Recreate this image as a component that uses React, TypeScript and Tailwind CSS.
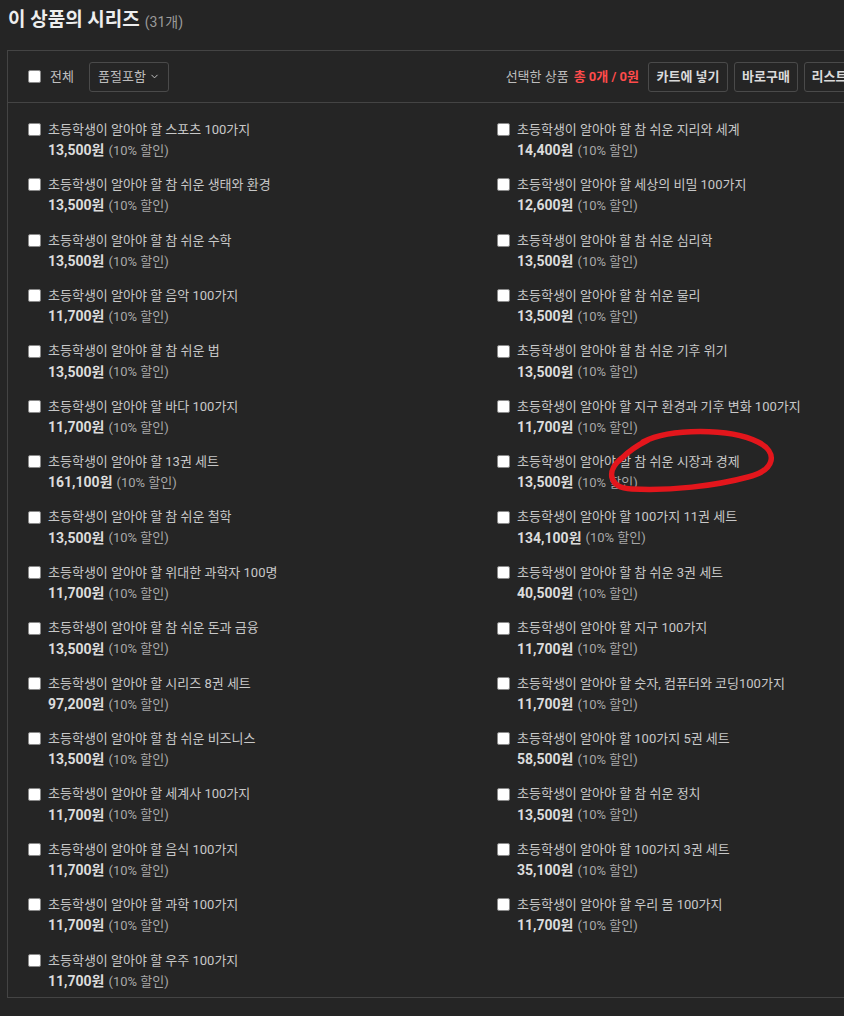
import { ChevronDown } from "lucide-react";

const left = [
  ["초등학생이 알아야 할 스포츠 100가지", "13,500"],
  ["초등학생이 알아야 할 참 쉬운 생태와 환경", "13,500"],
  ["초등학생이 알아야 할 참 쉬운 수학", "13,500"],
  ["초등학생이 알아야 할 음악 100가지", "11,700"],
  ["초등학생이 알아야 할 참 쉬운 법", "13,500"],
  ["초등학생이 알아야 할 바다 100가지", "11,700"],
  ["초등학생이 알아야 할 13권 세트", "161,100"],
  ["초등학생이 알아야 할 참 쉬운 철학", "13,500"],
  ["초등학생이 알아야 할 위대한 과학자 100명", "11,700"],
  ["초등학생이 알아야 할 참 쉬운 돈과 금융", "13,500"],
  ["초등학생이 알아야 할 시리즈 8권 세트", "97,200"],
  ["초등학생이 알아야 할 참 쉬운 비즈니스", "13,500"],
  ["초등학생이 알아야 할 세계사 100가지", "11,700"],
  ["초등학생이 알아야 할 음식 100가지", "11,700"],
  ["초등학생이 알아야 할 과학 100가지", "11,700"],
  ["초등학생이 알아야 할 우주 100가지", "11,700"],
];

const right = [
  ["초등학생이 알아야 할 참 쉬운 지리와 세계", "14,400"],
  ["초등학생이 알아야 할 세상의 비밀 100가지", "12,600"],
  ["초등학생이 알아야 할 참 쉬운 심리학", "13,500"],
  ["초등학생이 알아야 할 참 쉬운 물리", "13,500"],
  ["초등학생이 알아야 할 참 쉬운 기후 위기", "13,500"],
  ["초등학생이 알아야 할 지구 환경과 기후 변화 100가지", "11,700"],
  ["초등학생이 알아야 할 참 쉬운 시장과 경제", "13,500"],
  ["초등학생이 알아야 할 100가지 11권 세트", "134,100"],
  ["초등학생이 알아야 할 참 쉬운 3권 세트", "40,500"],
  ["초등학생이 알아야 할 지구 100가지", "11,700"],
  ["초등학생이 알아야 할 숫자, 컴퓨터와 코딩100가지", "11,700"],
  ["초등학생이 알아야 할 100가지 5권 세트", "58,500"],
  ["초등학생이 알아야 할 참 쉬운 정치", "13,500"],
  ["초등학생이 알아야 할 100가지 3권 세트", "35,100"],
  ["초등학생이 알아야 할 우리 몸 100가지", "11,700"],
];

const Box = () => (
  <span className="inline-block w-[13px] h-[13px] bg-white border border-[#8a8a8a] rounded-[2px] shrink-0" />
);

const Item = ({ title, price }: { title: string; price: string }) => (
  <div className="h-[42px]">
    <div className="flex items-center gap-[7px] h-[21px]">
      <Box />
      <span className="text-[13px] text-[#c8c8c8]">{title}</span>
    </div>
    <div className="pl-[20px] h-[21px] flex items-center">
      <span className="text-[14px] font-bold text-[#dcdcdc]">{price}원</span>
      <span className="text-[13px] text-[#a8a8a8] ml-[4px]">(10% 할인)</span>
    </div>
  </div>
);

const App = () => {
  const rows = left.map((l, i) => [l, right[i]]);
  return (
    <div
      className="relative w-full min-h-screen overflow-hidden bg-[#252525]"
      style={{ fontFamily: "Roboto, 'Noto Sans CJK KR', sans-serif" }}
    >
      <div className="pl-[8px] pt-[7px] h-[50px] flex items-start">
        <span className="text-[19px] font-bold text-[#eeeeee] leading-[26px]">이 상품의 시리즈</span>
        <span className="text-[14px] text-[#9a9a9a] leading-[26px] ml-[5px] pt-[2px]">(31개)</span>
      </div>

      <div className="ml-[7px] w-[908px] border border-[#444444]">
        <div className="h-[52px] border-b border-[#444444] flex items-center justify-between pl-[20px] pr-[20px]">
          <div className="flex items-center">
            <Box />
            <span className="ml-[9px] text-[13px] text-[#c0c0c0]">전체</span>
            <div className="ml-[15px] w-[80px] h-[30px] border border-[#4a4a4a] rounded-[3px] flex items-center justify-center gap-[3px]">
              <span className="text-[13px] text-[#bdbdbd]">품절포함</span>
              <ChevronDown size={11} strokeWidth={2} className="text-[#cfcfcf]" />
            </div>
          </div>
          <div className="flex items-center">
            <span className="text-[13px] text-[#bdbdbd]">선택한 상품</span>
            <span className="ml-[5px] text-[13px] font-bold text-[#ff4b4b]">총 0개 / 0원</span>
            <div className="ml-[9px] w-[80px] h-[30px] border border-[#4a4a4a] rounded-[3px] flex items-center justify-center text-[13px] font-bold text-[#dadada]">
              카트에 넣기
            </div>
            <div className="ml-[6px] w-[64px] h-[30px] border border-[#4a4a4a] rounded-[3px] flex items-center justify-center text-[13px] font-bold text-[#dadada]">
              바로구매
            </div>
            <div className="ml-[6px] w-[90px] h-[30px] border border-[#4a4a4a] rounded-[3px] flex items-center justify-center text-[13px] font-bold text-[#dadada]">
              리스트에 담기
            </div>
          </div>
        </div>

        <div className="pl-[20px] pt-[16px] pb-[5px] grid grid-cols-[469px_469px] gap-y-[13.4px]">
          {rows.map(([l, r], i) => (
            <div key={i} className="contents">
              <Item title={l[0]} price={l[1]} />
              {r ? <Item title={r[0]} price={r[1]} /> : <div />}
            </div>
          ))}
        </div>
      </div>

      <svg className="absolute left-0 top-0 pointer-events-none" width="844" height="1016">
        <path
          d="M643 442 C670 428 730 428 758 442 C778 452 776 470 748 477 C715 486 670 491 632 489 C608 488 606 470 622 458 C630 450 636 446 648 440"
          fill="none"
          stroke="#e3161c"
          strokeWidth="5.5"
          strokeLinecap="round"
        />
      </svg>
    </div>
  );
};

export default App;
